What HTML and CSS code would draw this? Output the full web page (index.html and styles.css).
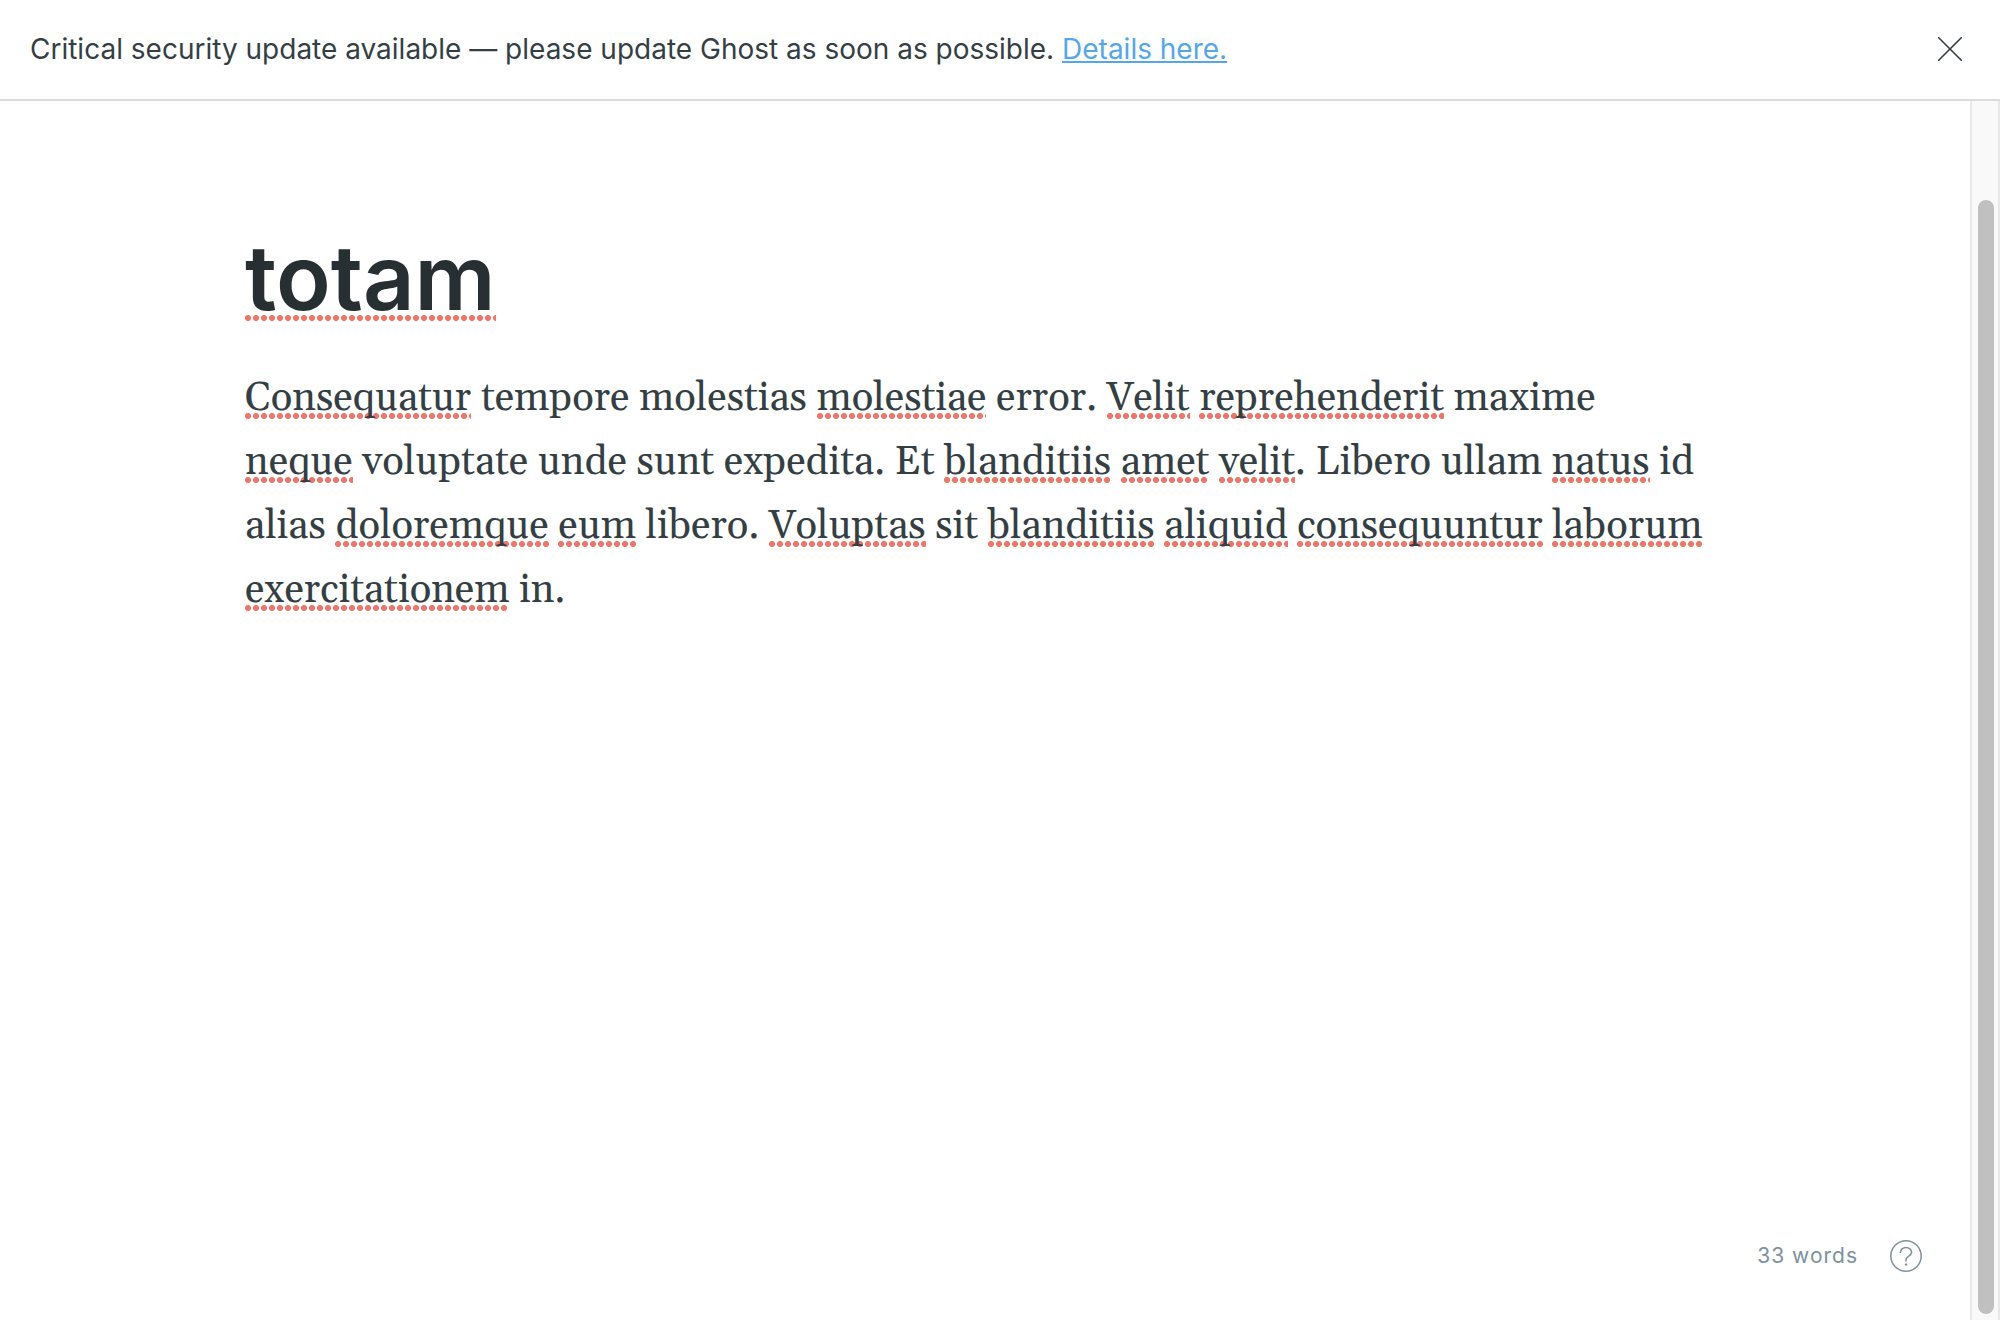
FILE: index.html
```html
<!DOCTYPE html>
<html lang="en">
<head>
<meta charset="utf-8">
<title>Ghost editor</title>
<meta name="viewport" content="width=device-width, initial-scale=1">
<link rel="stylesheet" href="styles.css">
</head>
<body>
<div class="app">
  <aside class="alert">
    <p class="alert-text">Critical security update available — please update Ghost as soon as possible. <a class="alert-link" href="#details">Details here.</a></p>
    <button class="alert-close" type="button" aria-label="Close">
      <svg class="icon-close" viewBox="0 0 24 24" aria-hidden="true"><path d="M.7.7l22.6 22.6M23.3.7L.7 23.3"/></svg>
    </button>
  </aside>
  <div class="workspace">
    <main class="editor">
      <article class="post">
        <h1 class="post-title"><span class="misspelt">totam</span></h1>
        <p class="post-body"><span class="misspelt">Consequatur</span> tempore molestias <span class="misspelt">molestiae</span> error. <span class="misspelt">Velit</span> <span class="misspelt">reprehenderit</span> maxime <span class="misspelt">neque</span> voluptate unde sunt expedita. Et <span class="misspelt">blanditiis</span> <span class="misspelt">amet</span> <span class="misspelt">velit</span>. Libero ullam <span class="misspelt">natus</span> id alias <span class="misspelt">doloremque</span> <span class="misspelt">eum</span> libero. <span class="misspelt">Voluptas</span> sit <span class="misspelt">blanditiis</span> <span class="misspelt">aliquid</span> <span class="misspelt">consequuntur</span> <span class="misspelt">laborum</span> <span class="misspelt">exercitationem</span> in.</p>
      </article>
      <footer class="status">
        <span class="word-count">33 words</span>
        <a class="help" href="#help" aria-label="Help">
          <svg class="icon-help" viewBox="0 0 32 32" aria-hidden="true"><circle cx="16" cy="16" r="15.2"/><path d="M10.4 13V12.6A5.6 5.2 0 0 1 21.6 12.6C21.6 15.9 16 16.4 16 19.6V21.6"/><circle class="dot" cx="16" cy="24.6" r="1.2"/></svg>
        </a>
      </footer>
    </main>
    <div class="scroll-track"><div class="scroll-thumb"></div></div>
  </div>
</div>
</body>
</html>
```
FILE: styles.css
```css
* { box-sizing: border-box; }

body {
  margin: 0;
  background: #fff;
  color: #343f44;
  font-family: Inter, "Liberation Sans", sans-serif;
}

.app {
  display: flex;
  flex-direction: column;
  min-height: 100vh;
}

.alert {
  display: flex;
  align-items: center;
  justify-content: space-between;
  padding: 31px 38px 32px 30px;
  border-bottom: 2px solid #dadddd;
  font-size: 28px;
  line-height: 36px;
}

.alert-text { margin: 0; }

.alert-link {
  color: #54a7eb;
  text-decoration-thickness: 2px;
  text-underline-offset: 2px;
}

.alert-close {
  display: flex;
  padding: 0;
  border: 0;
  background: none;
  cursor: pointer;
}

.icon-close {
  width: 24px;
  height: 24px;
  fill: none;
  stroke: #343f44;
  stroke-width: 1.6;
  stroke-linecap: round;
}

.workspace {
  display: flex;
  flex: 1;
}

.editor {
  display: flex;
  flex: 1;
  flex-direction: column;
  justify-content: space-between;
}

.post {
  width: 100%;
  max-width: 1480px;
  margin: 0 auto;
  padding: 122px 16px 0 0;
}

.post-title {
  margin: 0 0 34px;
  color: #282f33;
  font-size: 90px;
  font-weight: 600;
  line-height: 110px;
}

.post-body {
  margin: 0;
  font-family: Georgia, Gelasio, "Liberation Serif", serif;
  font-size: 40px;
  line-height: 64px;
}

/* Row of round dots beneath words flagged by the spell checker */
.misspelt {
  background: radial-gradient(circle at 3px 3px, #f07568 85%, transparent) left bottom 5px / 8px 6px repeat-x;
  background-image: radial-gradient(3px circle at 3px 3px, #f07568 90%, transparent 110%);
}

.post-title .misspelt { background-position: left bottom 11px; }

.status {
  display: flex;
  align-items: center;
  justify-content: flex-end;
  gap: 32px;
  padding: 48px;
  color: #7d919d;
  font-size: 21px;
  line-height: 32px;
}

.word-count { letter-spacing: 1px; }

.help {
  display: flex;
  color: inherit;
}

.icon-help {
  width: 32px;
  height: 32px;
  fill: none;
  stroke: currentColor;
  stroke-width: 1.5;
}

.icon-help .dot {
  fill: currentColor;
  stroke: none;
}

.scroll-track {
  display: flex;
  width: 30px;
  padding: 99px 4px 6px 6px;
  border: solid #e8e8e8;
  border-width: 0 2px;
  background: #f9f9f9;
}

.scroll-thumb {
  flex: 1;
  border-radius: 8px;
  background: #c0c0c0;
}
```
